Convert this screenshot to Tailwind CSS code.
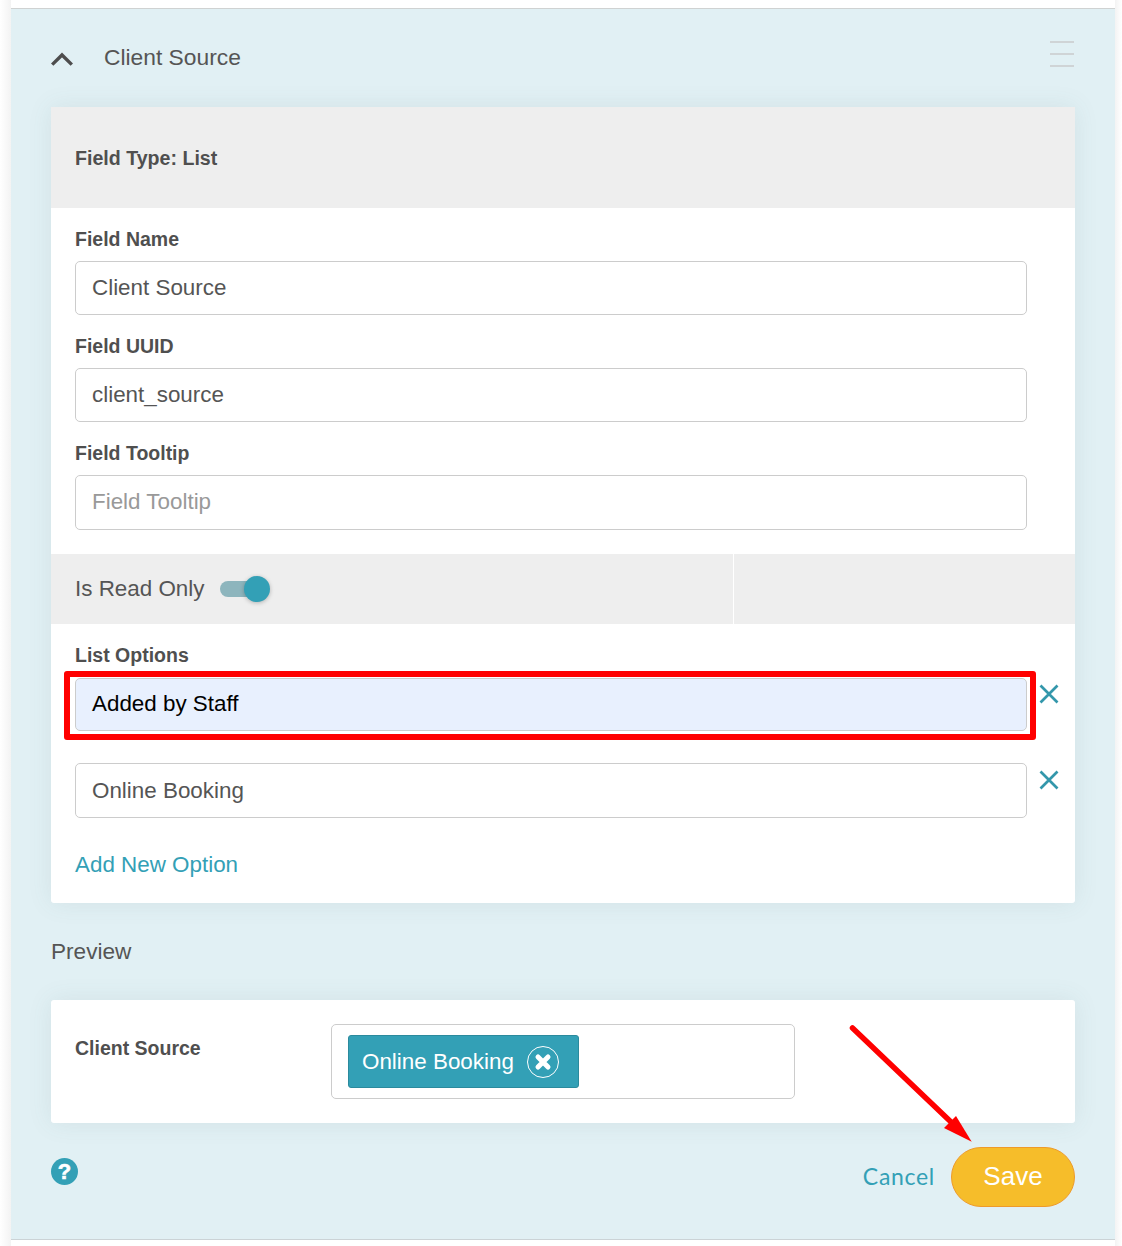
<!DOCTYPE html>
<html lang="en">
<head>
    <meta charset="UTF-8">
    <meta name="viewport" content="width=device-width, initial-scale=1.0">
    <title>Client Source</title>
    <script src="https://cdn.jsdelivr.net/npm/@tailwindcss/browser@4"></script>
</head>
<body class="bg-white font-['Liberation_Sans',Arial,sans-serif]">
    <div class="relative w-[1122px] h-[1246px] overflow-hidden flex">
        <div class="w-[11px] bg-gradient-to-r from-white to-[#f3f3f3]"></div>

        <div class="w-[1104px] flex flex-col">
            <div class="h-[9px] shrink-0 bg-white border-b border-[#cfd2d2]"></div>

            <!-- Panel -->
            <div class="h-[1231px] shrink-0 bg-[#e1f0f4] px-10 border-b border-[#cbd3d6]">
                <div class="h-[98px] flex items-start">
                    <svg class="mt-[43px] w-[22px] h-[14px]" viewBox="0 0 22 14" fill="none" stroke="#4d4d4d" stroke-width="3.4">
                        <path d="M1.2 12.6 L11 3 L20.8 12.6"/>
                    </svg>
                    <div class="ml-[31px] mt-[34px] text-[22.8px] leading-7 text-[#555]">Client Source</div>
                    <div class="ml-auto mr-px mt-[32px] w-6 flex flex-col gap-[10px]">
                        <div class="h-[2px] bg-[#cfd4d6]"></div>
                        <div class="h-[2px] bg-[#cfd4d6]"></div>
                        <div class="h-[2px] bg-[#cfd4d6]"></div>
                    </div>
                </div>

                <!-- Field card -->
                <div class="h-[796px] bg-white rounded-b-[3px] shadow-[0_0_24px_rgba(80,110,110,0.1)]">
                    <div class="h-[101px] bg-[#eeeeee] px-6 pt-[2px] flex items-center text-[19.6px] font-bold text-[#4f4f4f]">Field Type: List</div>

                    <div class="px-6 pt-[20px] h-[346px]">
                        <div class="h-[22px] text-[19.5px] leading-[22px] font-bold text-[#4f4f4f]">Field Name</div>
                        <div class="mt-[11px] w-[952px] h-[54px] px-4 flex items-center bg-white border border-[#cccccc] rounded-[5px] text-[22.4px] text-[#555]">Client Source</div>
                        <div class="mt-[20px] h-[22px] text-[19.5px] leading-[22px] font-bold text-[#4f4f4f]">Field UUID</div>
                        <div class="mt-[11px] w-[952px] h-[54px] px-4 flex items-center bg-white border border-[#cccccc] rounded-[5px] text-[22.4px] text-[#555]">client_source</div>
                        <div class="mt-[20px] h-[22px] text-[19.5px] leading-[22px] font-bold text-[#4f4f4f]">Field Tooltip</div>
                        <div class="mt-[11px] w-[952px] h-[55px] px-4 pb-[2px] flex items-center bg-white border border-[#cccccc] rounded-[5px] text-[22.4px] text-[#999]">Field Tooltip</div>
                    </div>

                    <div class="h-[70px] bg-[#eeeeee] flex">
                        <div class="w-[683px] px-6 flex items-center border-r border-white">
                            <span class="text-[22.4px] text-[#555]">Is Read Only</span>
                            <div class="ml-[16px] relative w-[50px] h-[26px] flex items-center">
                                <div class="w-[46px] h-[16px] rounded-full bg-[#8db5bd]"></div>
                                <div class="absolute right-0 top-0 w-[26px] h-[26px] rounded-full bg-[#33a0b6] shadow-[0_1px_4px_rgba(0,0,0,0.25)]"></div>
                            </div>
                        </div>
                    </div>

                    <div class="px-6 pt-[20px]">
                        <div class="h-[22px] text-[19.5px] leading-[22px] font-bold text-[#4f4f4f]">List Options</div>
                        <div class="mt-[12px] flex items-start">
                            <div class="w-[952px] shrink-0 h-[53px] px-4 pb-[2px] flex items-center bg-[#e8f0fe] border border-[#cccccc] rounded-[5px] text-[22.4px] text-black">Added by Staff</div>
                            <svg class="shrink-0 ml-[12px] mt-[6px] w-5 h-5" viewBox="0 0 20 20" fill="none" stroke="#3397ab" stroke-width="2.7">
                                <path d="M1.5 1.5 L18.5 18.5 M18.5 1.5 L1.5 18.5"/>
                            </svg>
                        </div>
                        <div class="mt-[32px] flex items-start">
                            <div class="w-[952px] shrink-0 h-[55px] px-4 flex items-center bg-white border border-[#cccccc] rounded-[5px] text-[22.4px] text-[#555]">Online Booking</div>
                            <svg class="shrink-0 ml-[12px] mt-[7px] w-5 h-5" viewBox="0 0 20 20" fill="none" stroke="#3397ab" stroke-width="2.7">
                                <path d="M1.5 1.5 L18.5 18.5 M18.5 1.5 L1.5 18.5"/>
                            </svg>
                        </div>
                        <div class="mt-[33px] text-[22.4px] leading-[28px] text-[#33a0b6]">Add New Option</div>
                    </div>
                </div>

                <div class="mt-[35px] text-[22.6px] leading-[28px] text-[#555]">Preview</div>

                <!-- Preview card -->
                <div class="mt-[34px] h-[123px] bg-white rounded-[3px] shadow-[0_0_24px_rgba(80,110,110,0.1)] px-6 pt-[24px] flex items-start">
                    <div class="w-[256px] mt-[13px] text-[19.5px] leading-[22px] font-bold text-[#4f4f4f]">Client Source</div>
                    <div class="w-[464px] h-[75px] bg-white border border-[#cccccc] rounded-[5px] pl-4 pt-[10px]">
                        <div class="w-[231px] h-[53px] bg-[#33a0b6] border border-[#2b8a9d] rounded-[3px] pl-[13px] flex items-center text-[22.4px] text-white">
                            Online Booking
                            <span class="ml-[13px] w-[32px] h-[32px] rounded-full border border-white flex items-center justify-center">
                                <svg class="w-[18px] h-[18px]" viewBox="0 0 18 18" fill="none" stroke="#fff" stroke-width="5" stroke-linecap="round">
                                    <path d="M4 4 L14 14 M14 4 L4 14"/>
                                </svg>
                            </span>
                        </div>
                    </div>
                </div>

                <!-- Footer -->
                <div class="mt-[24px] flex items-start">
                    <svg class="mt-[11px] w-[27px] h-[27px]" viewBox="0 0 27 27">
                        <circle cx="13.5" cy="13.5" r="13.5" fill="#33a0b6"/>
                        <text x="13.5" y="21" text-anchor="middle" font-family="Liberation Sans, Arial, sans-serif" font-weight="700" font-size="22" fill="#fff" stroke="#fff" stroke-width="0.6">?</text>
                    </svg>
                    <div class="ml-auto flex items-center gap-4">
                        <span class="pb-[2px] font-['Lato',sans-serif] text-[23px] tracking-[0.7px] text-[#33a0b6]">Cancel</span>
                        <div class="w-[124px] h-[60px] pb-[2px] rounded-full bg-[#f6bd2a] border border-[#ee9a2a] flex items-center justify-center text-[26px] text-white">Save</div>
                    </div>
                </div>
            </div>
        </div>

        <div class="flex-1 bg-gradient-to-r from-[#f3f3f3] to-white"></div>

        <!-- Annotations drawn over the screenshot -->
        <div class="absolute left-[64px] top-[671px] w-[972px] h-[69px] border-[6px] border-[#ff0000] rounded-[3px]"></div>
        <svg class="absolute left-[845px] top-[1020px] w-[135px] h-[130px]" viewBox="0 0 135 130" fill="none">
            <path d="M7.5 8 L106 102" stroke="#ff0000" stroke-width="5.5" stroke-linecap="round"/>
            <path d="M126.7 121.7 L111 96 L99 108 Z" fill="#ff0000"/>
        </svg>
    </div>
</body>
</html>
